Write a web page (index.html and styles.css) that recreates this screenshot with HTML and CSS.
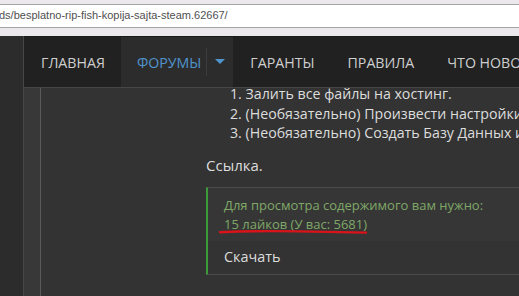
FILE: index.html
```html
<!DOCTYPE html>
<html lang="ru">
<head>
    <meta charset="UTF-8">
    <meta name="viewport" content="width=device-width, initial-scale=1.0">
    <title>Бесплатно рип fish копия сайта steam</title>
    <link rel="stylesheet" href="styles.css">
</head>
<body>

    <div class="browser">
        <div class="urlbar">ds/besplatno-rip-fish-kopija-sajta-steam.62667/</div>
    </div>

    <div class="site">
        <div class="side"></div>

        <div class="main">
            <div class="nav">
                <a class="tab" href="#">Главная</a>
                <a class="tab active" href="#">Форумы<span class="split"></span><span class="arrow"></span></a>
                <a class="tab" href="#">Гаранты</a>
                <a class="tab" href="#">Правила</a>
                <a class="tab" href="#">Что нового?</a>
            </div>

            <div class="content">
                <div class="rail"></div>

                <div class="post">
                    <div class="steps">
                        <div>1. Залить все файлы на хостинг.</div>
                        <div>2. (Необязательно) Произвести настройки в файле конфигурации.</div>
                        <div>3. (Необязательно) Создать Базу Данных и импортировать дамп.</div>
                    </div>

                    <p class="link-title">Ссылка.</p>

                    <div class="hidden-box">
                        <div class="hidden-note">
                            Для просмотра содержимого вам нужно:<br>
                            <span class="likes">15 лайков (У вас: 5681)
                                <svg class="scribble" width="152" height="6" viewBox="0 0 152 6">
                                    <path d="M2 3.2 Q 40 1.6 80 2.4 T 148 3.6" fill="none" stroke="#d8141a" stroke-width="2.4" stroke-linecap="round"/>
                                </svg>
                            </span>
                        </div>
                        <div class="download">Скачать</div>
                    </div>
                </div>
            </div>
        </div>
    </div>

</body>
</html>
```

FILE: styles.css
```css
body {
    margin: 0;
    background-color: #333;
    font-family: "Open Sans", "Noto Sans", sans-serif;
    color: #ddd;
    width: 519px;
    height: 296px;
    overflow: hidden;
}

/* browser chrome */
.browser {
    height: 36px;
    padding-top: 4px;
    box-sizing: border-box;
    background-color: #ebe9eb;
}

.urlbar {
    height: 22px;
    line-height: 21px;
    background-color: #fff;
    border-top: 1px solid #a4a4a4;
    border-bottom: 1px solid #a4a4a4;
    font-family: "Liberation Sans", Arial, sans-serif;
    font-size: 11px;
    color: #505050;
    text-indent: -1px;
    white-space: nowrap;
}

/* site */
.site {
    display: flex;
    height: 260px;
}

.side {
    width: 23px;
    background-color: #2c2c2c;
    border-right: 1px solid #474747;
    flex-shrink: 0;
}

.main {
    flex: 1;
    display: flex;
    flex-direction: column;
    min-width: 0;
}

.nav {
    display: flex;
    height: 50px;
    background-color: #212121;
    border-top: 1px solid #1a1a1a;
    border-bottom: 1px solid #464646;
    white-space: nowrap;
}

.tab {
    display: flex;
    align-items: center;
    padding: 0 16px 0 17px;
    color: #cfcfcf;
    font-size: 14.2px;
    text-transform: uppercase;
    text-decoration: none;
}

.tab.active {
    background-color: #2c2c2c;
    color: #4f94cd;
    padding-left: 16px;
    padding-right: 8px;
}

.split {
    width: 1px;
    height: 28px;
    background-color: #3c3c3c;
    margin: 0 8px 0 5px;
}

.arrow {
    width: 0;
    height: 0;
    border-left: 5px solid transparent;
    border-right: 5px solid transparent;
    border-top: 5px solid #4f94cd;
    margin-bottom: 2px;
}

.content {
    display: flex;
    flex: 1;
}

.rail {
    width: 16px;
    background-color: #383838;
    border-right: 1px solid #5a5a5a;
    flex-shrink: 0;
}

.post {
    flex: 1;
    padding: 0 0 0 165px;
    font-size: 15px;
    white-space: nowrap;
    overflow: hidden;
}

.steps {
    padding-left: 24px;
    font-size: 14.2px;
    line-height: 19.5px;
    margin-top: -4px;
}

.link-title {
    margin: 12px 0 12px;
    line-height: 20px;
}

.hidden-box {
    border-top: 1px solid #4b4b4b;
    border-bottom: 1px solid #4b4b4b;
    border-left: 2px solid #3d9a3a;
}

.hidden-note {
    background-color: #363636;
    padding: 8px 0 7px 16px;
    color: #7fa867;
    font-size: 13px;
    line-height: 19px;
}

.likes {
    position: relative;
}

.scribble {
    position: absolute;
    left: -6px;
    top: 14px;
}

.download {
    padding: 7px 0 8px 16px;
    font-size: 14.4px;
    line-height: 18px;
}
```
